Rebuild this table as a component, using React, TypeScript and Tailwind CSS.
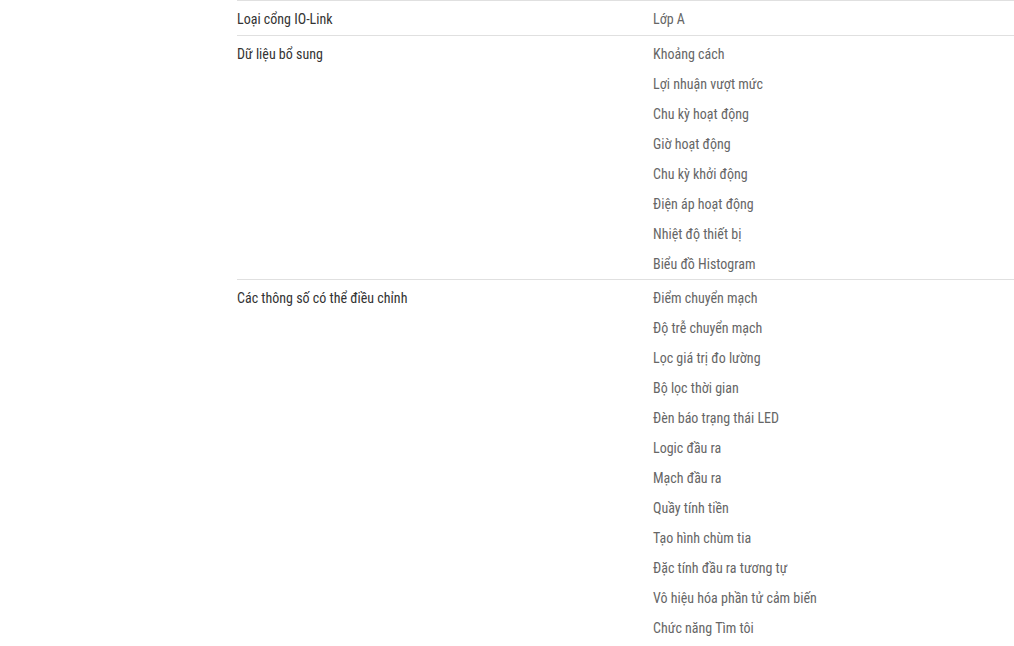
import React from "react";

const groups: { label: string; items: string[] }[] = [
  { label: "Loại cổng IO-Link", items: ["Lớp A"] },
  {
    label: "Dữ liệu bổ sung",
    items: [
      "Khoảng cách",
      "Lợi nhuận vượt mức",
      "Chu kỳ hoạt động",
      "Giờ hoạt động",
      "Chu kỳ khởi động",
      "Điện áp hoạt động",
      "Nhiệt độ thiết bị",
      "Biểu đồ Histogram",
    ],
  },
  {
    label: "Các thông số có thể điều chỉnh",
    items: [
      "Điểm chuyển mạch",
      "Độ trễ chuyển mạch",
      "Lọc giá trị đo lường",
      "Bộ lọc thời gian",
      "Đèn báo trạng thái LED",
      "Logic đầu ra",
      "Mạch đầu ra",
      "Quầy tính tiền",
      "Tạo hình chùm tia",
      "Đặc tính đầu ra tương tự",
      "Vô hiệu hóa phần tử cảm biến",
      "Chức năng Tìm tôi",
    ],
  },
];

export default function App() {
  return (
    <div className="min-h-[646px] w-full bg-white font-['Roboto_Condensed','Roboto',sans-serif] text-[14px]">
      <div className="ml-[237px]">
        {groups.map((g, i) => (
          <div
            key={g.label}
            className={
              i === 0
                ? "flex border-t border-[#e0e0e0] pt-[3px] pb-[1px] leading-[30px]"
                : "flex border-t border-[#e0e0e0] pt-[3px] leading-[30px]"
            }
          >
            <div className="w-[416px] shrink-0 text-[#333333]">{g.label}</div>
            <div className="flex flex-col text-[#666666]">
              {g.items.map((it) => (
                <div key={it}>{it}</div>
              ))}
            </div>
          </div>
        ))}
      </div>
    </div>
  );
}
